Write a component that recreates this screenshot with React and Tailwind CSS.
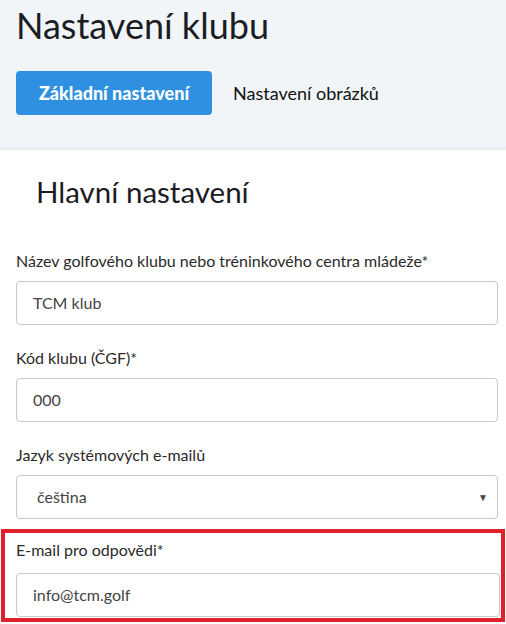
import React from 'react';

const Field = ({ label, value }) => (
  <div>
    <label className="block text-[16px] leading-5 text-[#2a2a2a] mb-[10px]">{label}</label>
    <div className="h-[44px] border border-[#c8c8c8] rounded-[4px] bg-white flex items-center px-[16px] text-[16px] text-[#444]">
      {value}
    </div>
  </div>
);

const App = () => {
  return (
    <div className="w-[506px] h-[624px] overflow-hidden bg-white" style={{ fontFamily: 'Lato, sans-serif' }}>
      <div className="bg-[#f1f5f8] h-[150px] px-[16px] pt-[3px]">
        <h1 className="text-[36px] leading-[44px] text-[#1c1c24]">Nastavení klubu</h1>
        <div className="flex items-center mt-[24px]">
          <button className="bg-[#2f8fe0] text-white font-black text-[18px] h-[44px] w-[196px] rounded-[4px]">
            Základní nastavení
          </button>
          <span className="ml-[21px] text-[18px] text-[#111]">Nastavení obrázků</span>
        </div>
      </div>
      <div className="bg-white shadow-[0_-2px_4px_rgba(0,0,0,0.06)] pt-[22px]">
        <h2 className="pl-[36px] text-[29.5px] leading-[40px] text-[#1c1c24]">Hlavní nastavení</h2>
        <div className="px-[16px] pt-[39px] pr-[8px] flex flex-col gap-[23px]">
          <Field label="Název golfového klubu nebo tréninkového centra mládeže*" value="TCM klub" />
          <Field label="Kód klubu (ČGF)*" value="000" />
          <div>
            <label className="block text-[16px] leading-5 text-[#2a2a2a] mb-[10px]">Jazyk systémových e-mailů</label>
            <div className="h-[44px] border border-[#c8c8c8] rounded-[4px] bg-white flex items-center justify-between pl-[20px] pr-[9px] text-[16px] text-[#444]">
              <span>čeština</span>
              <span className="text-[10px] text-[#444]">▼</span>
            </div>
          </div>
        </div>
        <div className="mt-[10px] mx-[1px] border-[4px] border-[#e0202a] pt-[7px] pl-[11px] pr-[1px] pb-[1px]">
          <label className="block text-[16px] leading-5 text-[#2a2a2a] mb-[13px]">E-mail pro odpovědi*</label>
          <div className="h-[44px] border border-[#c8c8c8] rounded-[4px] bg-white flex items-center px-[16px] text-[16px] text-[#444]">
            info@tcm.golf
          </div>
        </div>
      </div>
    </div>
  );
};

export default App;
